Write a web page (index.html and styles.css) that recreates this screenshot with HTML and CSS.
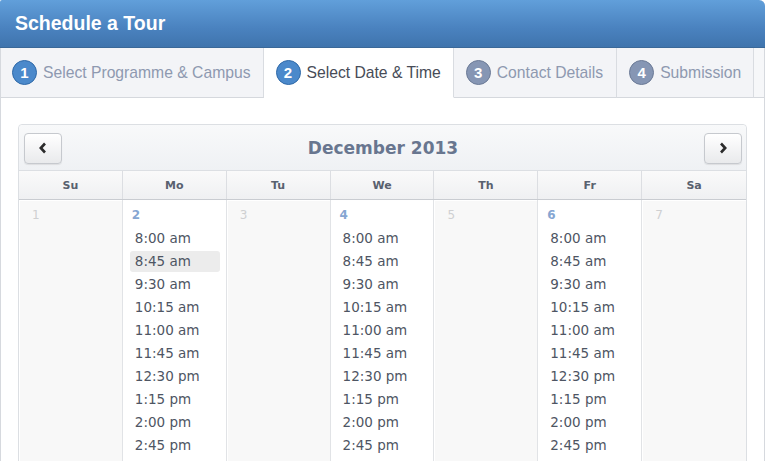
FILE: index.html
```html
<!DOCTYPE html>
<html lang="en">

<head>
    <meta charset="UTF-8" />
    <meta name="viewport" content="width=device-width, initial-scale=1.0" />
    <title>Schedule a Tour</title>
    <link rel="stylesheet" href="styles.css">
</head>

<body>
    <div class="panel">
        <div class="panel-head">Schedule a Tour</div>

        <div class="steps">
            <div class="step done"><span class="num">1</span>Select Programme &amp; Campus</div>
            <div class="step active"><span class="num">2</span>Select Date &amp; Time</div>
            <div class="step"><span class="num">3</span>Contact Details</div>
            <div class="step"><span class="num">4</span>Submission</div>
            <div class="step-fill"></div>
        </div>

        <div class="panel-body">
            <div class="calendar">
                <div class="cal-head">
                    <button class="nav-btn" aria-label="Previous month">
                        <svg width="10" height="12" viewBox="0 0 10 12"><polyline points="7,1.5 2.8,6 7,10.5" fill="none" stroke="#2b2b2b" stroke-width="2.6" stroke-linejoin="miter"/></svg>
                    </button>
                    <div class="cal-title">December 2013</div>
                    <button class="nav-btn" aria-label="Next month">
                        <svg width="10" height="12" viewBox="0 0 10 12"><polyline points="3,1.5 7.2,6 3,10.5" fill="none" stroke="#2b2b2b" stroke-width="2.6" stroke-linejoin="miter"/></svg>
                    </button>
                </div>

                <div class="weekdays">
                    <div>Su</div>
                    <div>Mo</div>
                    <div>Tu</div>
                    <div>We</div>
                    <div>Th</div>
                    <div>Fr</div>
                    <div>Sa</div>
                </div>

                <div class="days">
                    <div class="day off"><span class="date">1</span></div>
                    <div class="day">
                        <span class="date">2</span>
                        <ul class="slots">
                            <li>8:00 am</li>
                            <li class="hover">8:45 am</li>
                            <li>9:30 am</li>
                            <li>10:15 am</li>
                            <li>11:00 am</li>
                            <li>11:45 am</li>
                            <li>12:30 pm</li>
                            <li>1:15 pm</li>
                            <li>2:00 pm</li>
                            <li>2:45 pm</li>
                        </ul>
                    </div>
                    <div class="day off"><span class="date">3</span></div>
                    <div class="day">
                        <span class="date">4</span>
                        <ul class="slots">
                            <li>8:00 am</li>
                            <li>8:45 am</li>
                            <li>9:30 am</li>
                            <li>10:15 am</li>
                            <li>11:00 am</li>
                            <li>11:45 am</li>
                            <li>12:30 pm</li>
                            <li>1:15 pm</li>
                            <li>2:00 pm</li>
                            <li>2:45 pm</li>
                        </ul>
                    </div>
                    <div class="day off"><span class="date">5</span></div>
                    <div class="day">
                        <span class="date">6</span>
                        <ul class="slots">
                            <li>8:00 am</li>
                            <li>8:45 am</li>
                            <li>9:30 am</li>
                            <li>10:15 am</li>
                            <li>11:00 am</li>
                            <li>11:45 am</li>
                            <li>12:30 pm</li>
                            <li>1:15 pm</li>
                            <li>2:00 pm</li>
                            <li>2:45 pm</li>
                        </ul>
                    </div>
                    <div class="day off"><span class="date">7</span></div>
                </div>
            </div>
        </div>
    </div>
</body>

</html>
```

FILE: styles.css
```css
body {
    margin: 0;
    background-color: #ffffff;
    font-family: "Liberation Sans", Arial, sans-serif;
}

.panel {
    width: 765px;
    box-sizing: border-box;
    border: 1px solid #d6d9de;
    border-top: none;
    border-radius: 6px 6px 0 0;
}

/* blue title bar */
.panel-head {
    height: 48px;
    box-sizing: border-box;
    padding: 0 0 0 15px;
    line-height: 46px;
    margin: 0 -1px;
    color: #ffffff;
    font-size: 19.5px;
    font-weight: bold;
    background: linear-gradient(#619fda, #4a82bf 60%, #3f74ad);
    border-bottom: 1px solid #3a6898;
    border-radius: 2px 6px 0 0;
}

/* wizard steps */
.steps {
    display: flex;
    height: 50px;
}

.step {
    display: flex;
    align-items: center;
    gap: 6px;
    padding: 0 13px 0 12px;
    font-size: 15.7px;
    color: #8e99b0;
    background-color: #f3f4f7;
    border-right: 1px solid #d9dce1;
    border-bottom: 1px solid #d5d8dd;
}

.step.done {
    padding: 0 12px 0 11px;
}

.step.active {
    color: #474c57;
    background-color: #ffffff;
    border-bottom-color: #ffffff;
    padding: 0 12px;
}

.step .num {
    width: 23px;
    height: 23px;
    border-radius: 50%;
    border: 1px solid #6b7a96;
    background-color: #8696b4;
    color: #ffffff;
    font-size: 15px;
    font-weight: bold;
    display: flex;
    align-items: center;
    justify-content: center;
}

.step.done .num,
.step.active .num {
    border-color: #2f69a8;
    background-color: #4b89cb;
}

.step:nth-child(4) {
    padding-right: 12px;
}

.step-fill {
    flex: 1;
    background-color: #f6f7f9;
    border-bottom: 1px solid #d5d8dd;
}

.panel-body {
    padding: 26px 17px 0;
}

/* calendar */
.calendar {
    border: 1px solid #dcdfe3;
    border-radius: 4px;
    font-family: "DejaVu Sans", Verdana, sans-serif;
}

.cal-head {
    display: flex;
    align-items: center;
    justify-content: space-between;
    height: 45px;
    padding: 0 4px 0 5px;
    background: linear-gradient(#f8f9fa, #eff1f4);
    border-bottom: 1px solid #dcdfe3;
    border-radius: 4px 4px 0 0;
}

.nav-btn {
    width: 38px;
    height: 31px;
    padding: 0;
    margin-top: 1px;
    border: 1px solid #c6c9ce;
    border-radius: 4px;
    background: linear-gradient(#ffffff, #e9eaec);
    box-shadow: 0 1px 1px rgba(0, 0, 0, 0.08);
    display: flex;
    align-items: center;
    justify-content: center;
    cursor: pointer;
}

.cal-title {
    font-size: 17px;
    font-weight: bold;
    color: #68768f;
    margin-top: 1px;
}

.weekdays {
    display: grid;
    grid-template-columns: repeat(7, 1fr);
    height: 28px;
    background: linear-gradient(#fafafa, #eff0f2);
    border-bottom: 1px solid #c9ccd1;
}

.weekdays div {
    display: flex;
    align-items: center;
    justify-content: center;
    font-size: 11px;
    font-weight: bold;
    color: #59616f;
    border-right: 1px solid #dcdee2;
}

.weekdays div:last-child,
.day:last-child {
    border-right: none;
}

.days {
    display: grid;
    grid-template-columns: repeat(7, 1fr);
}

.day {
    min-height: 300px;
    padding: 8px 0 0 9px;
    border-right: 1px solid #e1e3e6;
    background-color: #ffffff;
}

.day.off {
    background-color: #f8f8f8;
    box-shadow: inset 1px 1px 0 #ffffff;
}

.date {
    display: block;
    height: 17px;
    font-size: 12px;
    font-weight: bold;
    color: #86a6d2;
}

.day.off .date {
    padding-left: 4px;
    font-weight: normal;
    color: #cfd0d2;
}

.slots {
    list-style: none;
    margin: 2px 0 0;
    padding: 0;
}

.slots li {
    width: 90px;
    height: 23px;
    line-height: 23px;
    margin-left: -2px;
    padding-left: 5px;
    box-sizing: border-box;
    font-size: 13.5px;
    color: #4e5563;
    border-radius: 3px;
    cursor: pointer;
}

.slots li.hover {
    background-color: #ececec;
    line-height: 21px;
    height: 21px;
    margin-top: 1px;
    margin-bottom: 1px;
}
```
